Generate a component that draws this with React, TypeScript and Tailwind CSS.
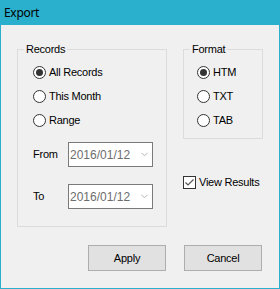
import React from 'react';

const Radio = ({checked, label}: {checked?: boolean; label: string}) => (
  <label className="flex items-center h-[24px] gap-[3px]">
    <span className="w-[13px] h-[13px] rounded-full border border-[#333333] bg-white flex items-center justify-center">
      {checked && <span className="w-[7px] h-[7px] rounded-full bg-[#333333]" />}
    </span>
    <span>{label}</span>
  </label>
);

const DateBox = ({label}: {label: string}) => (
  <div className="flex items-center">
    <span className="w-[35px]">{label}</span>
    <div className="w-[85px] h-[25px] border border-[#7a7a7a] bg-white flex items-center pl-[1px] pr-[4px] text-[12px] tracking-normal text-[#6d6d6d]">
      <span className="flex-1">2016/01/12</span>
      <svg width="7" height="5" viewBox="0 0 7 5" className="text-[#b4b4b4]">
        <path d="M0.5 0.8 L3.5 3.8 L6.5 0.8" fill="none" stroke="currentColor" strokeWidth="1" />
      </svg>
    </div>
  </div>
);

const GroupTitle = ({children}: {children: React.ReactNode}) => (
  <span className="self-start -mt-[7px] ml-[6px] px-[2px] leading-[13px] bg-[#f0f0f0]">{children}</span>
);

const App = () => {
  return (
    <div className="w-[280px] h-[289px] bg-[#2aafcc] flex flex-col font-['Liberation_Sans',Arial,sans-serif] text-[11px] tracking-[-0.25px] text-black">

      {/* Title bar */}
      <div className="h-[25px] shrink-0 flex items-center px-[4px] font-['Noto_Sans',sans-serif] text-[12px] tracking-[-0.3px]">
        Export
      </div>

      {/* Body */}
      <div className="flex-1 mx-px mb-px bg-[#f0f0f0] px-[16px] pt-[24px] flex flex-col">

        <div className="flex gap-[16px]">
          {/* Records group */}
          <div className="w-[150px] h-[178px] border border-[#dcdcdc] flex flex-col">
            <GroupTitle>Records</GroupTitle>
            <div className="pl-[15px] pt-[4px] flex flex-col">
              <Radio checked label="All Records" />
              <Radio label="This Month" />
              <Radio label="Range" />
            </div>
            <div className="pl-[15px] mt-[10px] flex flex-col gap-[17px]">
              <DateBox label="From" />
              <DateBox label="To" />
            </div>
          </div>

          <div className="w-[80px] flex flex-col">
            {/* Format group */}
            <div className="h-[90px] border border-[#dcdcdc] flex flex-col">
              <GroupTitle>Format</GroupTitle>
              <div className="pl-[13px] pt-[4px] flex flex-col">
                <Radio checked label="HTM" />
                <Radio label="TXT" />
                <Radio label="TAB" />
              </div>
            </div>

            <label className="mt-[37px] h-[13px] flex items-center gap-[3px]">
              <span className="w-[13px] h-[13px] border border-[#333333] bg-white flex items-center justify-center">
                <svg width="11" height="11" viewBox="0 0 11 11">
                  <path d="M1.5 5.5 L4 8 L9.5 2.5" fill="none" stroke="#555555" strokeWidth="1.2" />
                </svg>
              </span>
              <span>View Results</span>
            </label>
          </div>
        </div>

        <div className="mt-[18px] flex justify-end gap-[18px] mr-px">
          <button className="w-[78px] h-[26px] bg-[#e1e1e1] border border-[#adadad]">Apply</button>
          <button className="w-[78px] h-[26px] bg-[#e1e1e1] border border-[#adadad]">Cancel</button>
        </div>

      </div>
    </div>
  );
};

export default App;
